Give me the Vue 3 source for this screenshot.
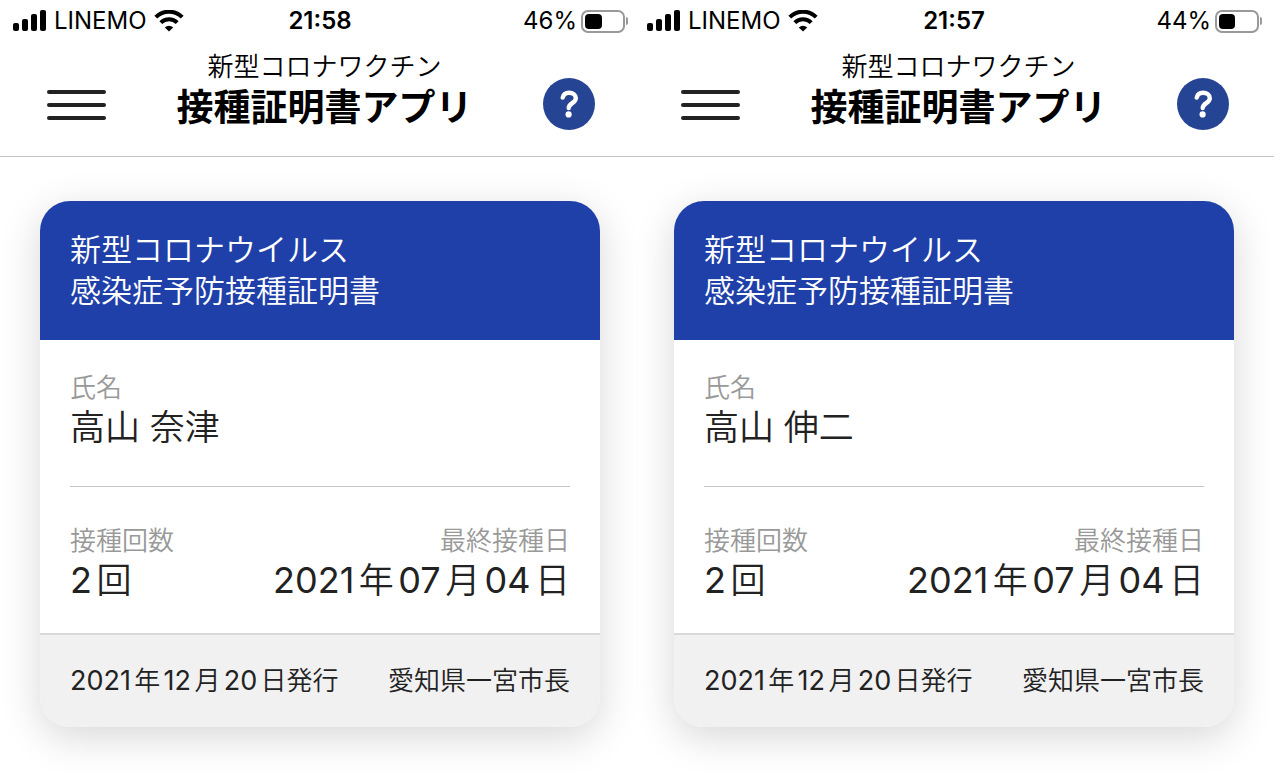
<script setup>
const screens = [
  {
    id: 1,
    carrier: 'LINEMO',
    time: '21:58',
    battery: 46,
    name: '高山 奈津',
    doses: '2回',
    lastDate: '2021年07月04日',
    issued: '2021年12月20日発行',
    issuer: '愛知県一宮市長'
  },
  {
    id: 2,
    carrier: 'LINEMO',
    time: '21:57',
    battery: 44,
    name: '高山 伸二',
    doses: '2回',
    lastDate: '2021年07月04日',
    issued: '2021年12月20日発行',
    issuer: '愛知県一宮市長'
  }
]

// digits get their own weight and size next to kanji
function splitDigits(text) {
  return text.match(/\d+|\D+/g).map((part) => ({
    text: part,
    isNumber: /\d/.test(part)
  }))
}
</script>

<template>
  <main class="screens">
    <section v-for="screen in screens" :key="screen.id" class="screen">
      <div class="status-bar">
        <div class="status-left">
          <svg class="signal" width="35" height="22" viewBox="0 0 35 22" aria-hidden="true">
            <rect x="1" y="13" width="6" height="8" rx="2" />
            <rect x="10" y="9" width="6" height="12" rx="2" />
            <rect x="19" y="4" width="6" height="17" rx="2" />
            <rect x="28" y="0" width="6" height="21" rx="2" />
          </svg>
          <span>{{ screen.carrier }}</span>
          <svg class="wifi" width="30" height="22" viewBox="0 0 30 22" aria-hidden="true">
            <path d="M1.8 7.2A18.5 18.5 0 0 1 28.2 7.2" fill="none" stroke="#000" stroke-width="4" />
            <path d="M6.8 12.6A11.5 11.5 0 0 1 23.2 12.6" fill="none" stroke="#000" stroke-width="4" />
            <path d="M15 21.6L10.8 17.4A6.2 6.2 0 0 1 19.2 17.4Z" />
          </svg>
        </div>
        <span class="time">{{ screen.time }}</span>
        <div class="status-right">
          <span>{{ screen.battery }}%</span>
          <span class="battery">
            <span class="battery-level" :style="{ width: screen.battery + '%' }"></span>
          </span>
          <span class="battery-tip"></span>
        </div>
      </div>

      <header class="app-header">
        <button class="menu-button" type="button" aria-label="メニュー">
          <span class="menu-line"></span>
          <span class="menu-line"></span>
          <span class="menu-line"></span>
        </button>
        <h1 class="app-title">
          <span class="app-subtitle">新型コロナワクチン</span>
          <span class="app-name">接種証明書アプリ</span>
        </h1>
        <button class="help-button" type="button" aria-label="ヘルプ">
          <svg width="52" height="52" viewBox="0 0 52 52" aria-hidden="true">
            <path
              d="M19.7 19.6C20.4 16.3 22.6 14.7 26 14.7C29.8 14.7 32.8 16.8 32.8 20.2C32.8 25 25.7 25.3 25.7 30"
              fill="none"
              stroke="#fff"
              stroke-width="4.4"
              stroke-linecap="round"
            />
            <circle cx="25.6" cy="36.4" r="3.1" fill="#fff" />
          </svg>
        </button>
      </header>

      <article class="card">
        <h2 class="card-title">新型コロナウイルス<br />感染症予防接種証明書</h2>
        <dl class="card-body">
          <div class="row">
            <div class="field">
              <dt>氏名</dt>
              <dd>{{ screen.name }}</dd>
            </div>
          </div>
          <div class="row">
            <div class="field">
              <dt>接種回数</dt>
              <dd>
                <span
                  v-for="(part, i) in splitDigits(screen.doses)"
                  :key="i"
                  :class="{ number: part.isNumber }"
                >{{ part.text }}</span>
              </dd>
            </div>
            <div class="field field-right">
              <dt>最終接種日</dt>
              <dd>
                <span
                  v-for="(part, i) in splitDigits(screen.lastDate)"
                  :key="i"
                  :class="{ number: part.isNumber }"
                >{{ part.text }}</span>
              </dd>
            </div>
          </div>
        </dl>
        <footer class="card-footer">
          <div>
            <span
              v-for="(part, i) in splitDigits(screen.issued)"
              :key="i"
              :class="{ number: part.isNumber }"
            >{{ part.text }}</span>
          </div>
          <div>{{ screen.issuer }}</div>
        </footer>
      </article>
    </section>
  </main>
</template>

<style>
body {
  margin: 0;
  background: #fff;
}
</style>

<style scoped>
.screens {
  display: flex;
  padding-right: 12px;
  font-family: Inter, 'Noto Sans CJK JP', sans-serif;
  color: #222;
  text-autospace: normal;
}

.screen {
  flex: 1;
  min-width: 0;
  padding-bottom: 54px;
}

.screen + .screen {
  margin-left: -6px;
}

.status-bar {
  display: grid;
  grid-template-columns: 1fr auto 1fr;
  align-items: center;
  height: 40px;
  padding: 0 12px;
  font-size: 24px;
  line-height: 42px;
  color: #000;
}

.status-left,
.status-right {
  display: flex;
  align-items: center;
}

.status-left {
  gap: 7px;
}

.status-right {
  justify-content: flex-end;
}

.time {
  font-weight: 600;
}

.battery {
  box-sizing: border-box;
  width: 44px;
  height: 23px;
  margin-left: 4px;
  padding: 2px;
  border: 2px solid #999;
  border-radius: 7px;
}

.battery-level {
  display: block;
  height: 15px;
  border-radius: 4px;
  background: #000;
}

.battery-tip {
  width: 2px;
  height: 8px;
  margin-left: 1px;
  border-radius: 0 2px 2px 0;
  background: #999;
}

.app-header {
  display: flex;
  align-items: flex-end;
  justify-content: space-between;
  padding: 9px 45px 26px 47px;
  border-bottom: 1px solid #c4c4c4;
}

.menu-button {
  display: flex;
  flex-direction: column;
  justify-content: flex-end;
  gap: 9px;
  width: 59px;
  height: 52px;
  padding: 0 0 10px;
  border: 0;
  background: none;
  cursor: pointer;
}

.menu-line {
  height: 4px;
  border-radius: 2px;
  background: #222;
}

.app-title {
  display: flex;
  flex-direction: column;
  align-items: center;
  margin: 0;
  color: #000;
}

.app-subtitle {
  font-size: 26px;
  font-weight: 350;
  line-height: 36px;
}

.app-name {
  font-size: 37px;
  font-weight: 700;
  line-height: 45px;
}

.help-button {
  width: 52px;
  height: 52px;
  padding: 0;
  border: 0;
  border-radius: 50%;
  background: #264494;
  cursor: pointer;
}

.help-button svg {
  display: block;
}

.card {
  margin: 44px 40px 0;
  border-radius: 30px;
  box-shadow: 0 10px 40px rgba(0, 0, 0, 0.16);
}

.card-title {
  margin: 0;
  padding: 28px 30px 29px;
  border-radius: 30px 30px 0 0;
  background: #1f40a9;
  color: #fff;
  font-size: 31px;
  font-weight: 350;
  line-height: 41px;
}

.card-body {
  margin: 0;
  padding: 0 30px;
  background: #fff;
}

.row {
  display: flex;
  justify-content: space-between;
  padding: 36px 0 32px;
}

.row:first-child {
  padding: 30px 0 38px;
  border-bottom: 1px solid #c4c4c4;
}

.field-right {
  text-align: right;
}

dt {
  color: #999;
  font-size: 26px;
  font-weight: 350;
  line-height: 36px;
}

dd {
  margin: 0;
  font-size: 35px;
  font-weight: 350;
  line-height: 42px;
}

.number {
  font-weight: 400;
}

dd .number {
  font-size: 36px;
}

.card-footer {
  display: flex;
  justify-content: space-between;
  padding: 28px 30px;
  border-top: 2px solid #d9d9d9;
  border-radius: 0 0 30px 30px;
  background: #f1f1f1;
  font-size: 26px;
  font-weight: 350;
  line-height: 36px;
}

.card-footer .number {
  font-size: 27px;
}
</style>
